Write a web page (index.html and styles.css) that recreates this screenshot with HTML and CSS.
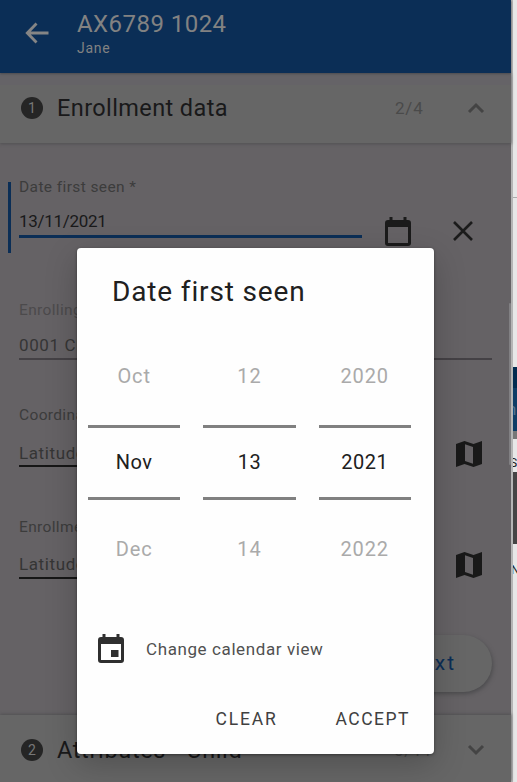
FILE: index.html
```html
<!DOCTYPE html>
<html lang="en">
<head>
<meta charset="utf-8">
<title>Enrollment</title>
<link rel="stylesheet" href="styles.css">
</head>
<body>
<div class="stage">
  <main class="app">
    <header class="topbar">
      <svg class="back" viewBox="0 0 24 24"><path d="M23.500 10.500H5.800L12.500 3.600 10.500 1.500 .3 12l10.200 10.500 2-2.100L5.800 13.500h17.700z"/></svg>
      <div class="heading">
        <h1 class="title">AX6789 1024</h1>
        <p class="subtitle">Jane</p>
      </div>
    </header>
    <section class="section">
      <span class="badge">1</span>
      <h2 class="section-title">Enrollment data</h2>
      <span class="count">2/4</span>
      <svg class="chevron" viewBox="0 0 18 12"><path d="M2 10l7-7 7 7"/></svg>
    </section>
    <div class="form">
      <div class="field active">
        <div class="input focused">
          <label class="label">Date first seen *</label>
          <div class="value strong">13/11/2021</div>
        </div>
        <svg class="calendar" viewBox="0 0 26 29"><path fill-rule="evenodd" d="M4.500 0h3v3h11V0h3v3H23a3 3 0 0 1 3 3v20a3 3 0 0 1-3 3H3a3 3 0 0 1-3-3V6a3 3 0 0 1 3-3h1.500zM3 10v16h20V10z"/></svg>
        <svg class="clear" viewBox="0 0 20 20"><path d="M1 1l18 18M19 1L1 19"/></svg>
      </div>
      <div class="field org">
        <div class="input muted">
          <label class="label">Enrolling Org</label>
          <div class="value">0001 CH</div>
        </div>
      </div>
      <div class="field geo">
        <div class="input">
          <label class="label">Coordinates</label>
          <div class="value">Latitude</div>
        </div>
        <svg class="map" viewBox="0 0 26 26"><path fill-rule="evenodd" d="M0 3L8.500 0l9 3L26 0v23l-8.500 3-9-3L0 26zM9 3.200v16.900l8 2.700V6z"/></svg>
      </div>
      <div class="field geo">
        <div class="input">
          <label class="label">Enrollment</label>
          <div class="value">Latitude</div>
        </div>
        <svg class="map" viewBox="0 0 26 26"><path fill-rule="evenodd" d="M0 3L8.500 0l9 3L26 0v23l-8.500 3-9-3L0 26zM9 3.200v16.900l8 2.700V6z"/></svg>
      </div>
      <button class="next">Next</button>
    </div>
    <section class="section last">
      <span class="badge">2</span>
      <h2 class="section-title attributes">Attributes - Child</h2>
      <span class="count">0/11</span>
      <svg class="chevron" viewBox="0 0 18 12"><path d="M2 2l7 7 7-7"/></svg>
    </section>
    <i class="scrollbar"></i>
  </main>
  <aside class="edge">
    <div class="edge-head"></div>
    <div class="edge-blank"></div>
    <div class="edge-status"></div>
    <div class="edge-bar">ni</div>
    <div class="edge-rule"></div>
    <div class="edge-text">S</div>
    <div class="edge-dark"></div>
    <div class="edge-text lower">N</div>
  </aside>
  <div class="dialog">
    <h2 class="dialog-title">Date first seen</h2>
    <div class="pickers">
      <div class="picker"><span>Oct</span><span class="current">Nov</span><span>Dec</span></div>
      <div class="picker"><span>12</span><span class="current">13</span><span>14</span></div>
      <div class="picker"><span>2020</span><span class="current">2021</span><span>2022</span></div>
    </div>
    <div class="change">
      <svg class="calendar" viewBox="0 0 26 29"><path fill-rule="evenodd" d="M4.500 0h3v3h11V0h3v3H23a3 3 0 0 1 3 3v20a3 3 0 0 1-3 3H3a3 3 0 0 1-3-3V6a3 3 0 0 1 3-3h1.500zM3 10v16h20V10zM13 16h7.500v7H13z"/></svg>
      <span class="change-text">Change calendar view</span>
    </div>
    <div class="actions"><span class="action">CLEAR</span><span class="action accept">ACCEPT</span></div>
  </div>
</div>
</body>
</html>
```
FILE: styles.css
```css
* { box-sizing: border-box; margin: 0; padding: 0; }
body { font-family: Roboto, "Noto Sans", sans-serif; color: #19191a; overflow: hidden; }
svg { display: block; flex: none; }
h1, h2 { font-weight: 400; }
.stage { position: relative; display: flex; width: 517px; height: 782px; overflow: hidden; }
.app { position: relative; width: 511px; height: 782px; flex: none; display: flex; flex-direction: column; background: #656265; }
.topbar { height: 73px; flex: none; background: #0b2e56; color: #828282; display: flex; padding: 10px 0 0 25px; position: relative; box-shadow: 0 1px 2px #4b4b50; }
.back { width: 24px; height: 24px; margin-top: 11px; fill: #858585; }
.heading { margin-left: 28px; }
.title { font-size: 24px; line-height: 28px; font-weight: 400; letter-spacing: .45px; }
.subtitle { font-size: 14px; line-height: 20px; letter-spacing: .7px; }
.section { height: 70px; flex: none; background: #666; display: flex; align-items: center; padding: 0 26px 0 21px; box-shadow: 0 1px 3px #505052; }
.topbar + .section { border-top: 12px solid #656367; padding-bottom: 13px; }
.badge { width: 22px; height: 22px; border-radius: 50%; background: #252525; color: #777; font-size: 14px; line-height: 22px; text-align: center; }
.section-title { margin-left: 14px; font-size: 23.500px; letter-spacing: .4px; flex: 1; white-space: nowrap; }
.attributes { letter-spacing: .65px; }
.count { width: 28px; margin-right: 44px; font-size: 17px; letter-spacing: .8px; color: #4a4a4a; }
.chevron { width: 18px; height: 12px; fill: none; stroke: #444; stroke-width: 3; }
.form { flex: 1; display: flex; flex-direction: column; }
.field { display: flex; }
.input { border-bottom: 2px solid #161616; width: 380px; color: #353535; }
.label { display: block; font-size: 15.500px; line-height: 20px; letter-spacing: .35px; color: #3c3c3c; }
.value { font-size: 17px; line-height: 22px; letter-spacing: .6px; }
.active { margin: 39px 0 0 8px; border-left: 3px solid #0b2e56; height: 71px; padding-left: 8px; }
.focused { width: 343px; height: 56px; border-bottom: 3px solid #0b2e56; }
.focused .label { line-height: 10px; letter-spacing: .4px; }
.focused .value { margin-top: 18px; letter-spacing: -.3px; }
.focused .strong { color: #19191a; }
.calendar { width: 26px; height: 29px; fill: #2f2f2f; }
.active .calendar { margin: 35px 0 0 23px; fill: #1b1b1b; }
.clear { width: 20px; height: 20px; margin: 39px 0 0 42px; fill: none; stroke: #1b1b1b; stroke-width: 2.600; }
.org { margin: 47px 19px 0; }
.muted { width: 473px; height: 60px; border-bottom: 2px solid #444145; }
.muted .label { color: #4c4a4c; }
.muted .value { margin-top: 14px; }
.geo { margin: 45px 0 0 19px; height: 62px; }
.geo + .geo { margin-top: 50px; }
.geo .input { height: 62px; }
.geo .value { margin-top: 17px; }
.map { width: 26px; height: 26px; margin: 36px 0 0 57px; fill: #191919; }
.geo + .geo .map { margin-top: 35px; }
.geo + .geo .value { margin-top: 16px; }
.next { margin: 56px 19px 0 auto; width: 126px; height: 57px; border: 0; border-radius: 29px; background: #666; color: #0b2e56; font: 21px Roboto, sans-serif; letter-spacing: 2px; padding: 0 36px 2px 0; text-align: right; box-shadow: 1px 2px 4px #4b4b4d; }
.last { height: 67px; padding-top: 3px; box-shadow: 0 -1px 3px #515153; }
.last .count { width: 36px; margin-right: 37px; }
.scrollbar { position: absolute; right: 0; top: 303px; width: 2px; height: 162px; background: #818083; border-radius: 2px; }
.edge { width: 6px; height: 782px; flex: none; overflow: hidden; border-left: 2px solid #b5b5b5; background: #e7e7e7; }
.edge-head { height: 198px; border-bottom: 1px solid #aaa; }
.edge-blank { height: 169px; }
.edge-status { height: 21px; background: #022b50; }
.edge-bar { height: 43px; background: #0e3c66; color: #53728f; font-size: 17px; line-height: 42px; text-indent: -6px; }
.edge-rule { height: 8px; background: #777; }
.edge-text { height: 33px; font-size: 12px; line-height: 48px; text-indent: -3px; }
.edge-text.lower { text-indent: -2px; line-height: 52px; }
.edge-dark { height: 72px; background: #454545; }
.dialog { position: absolute; left: 77px; top: 248px; width: 357px; height: 505.500px; border-radius: 4px; background: #fefefe; box-shadow: 0 1px 3px rgba(0, 0, 0, .4), 0 10px 32px rgba(0, 0, 0, .22); display: flex; flex-direction: column; }
.dialog-title { margin: 27px 0 0 35px; font-size: 28px; line-height: 34px; letter-spacing: .85px; color: #202020; }
.pickers { display: flex; gap: 23px; margin: 24px 0 0 11px; }
.picker { width: 92.300px; display: flex; flex-direction: column; text-align: center; color: #aaa; font-size: 20px; letter-spacing: .9px; line-height: 86px; }
.picker span { height: 92px; }
.picker span:last-child { line-height: 98px; }
.picker .current { height: 75px; line-height: 68px; color: #202020; border-top: 3px solid #808080; border-bottom: 3px solid #808080; letter-spacing: .5px; }
.change { margin: 42px 0 0 21px; display: flex; align-items: center; }
.change-text { margin: 1px 0 0 22px; color: #505050; font-size: 17px; letter-spacing: .6px; }
.actions { display: flex; justify-content: flex-end; margin: 45px 24px 0 0; gap: 58px; font-size: 17.500px; line-height: 22px; color: #404040; }
.action { letter-spacing: 1.800px; }
.accept { letter-spacing: 1.500px; }
```
